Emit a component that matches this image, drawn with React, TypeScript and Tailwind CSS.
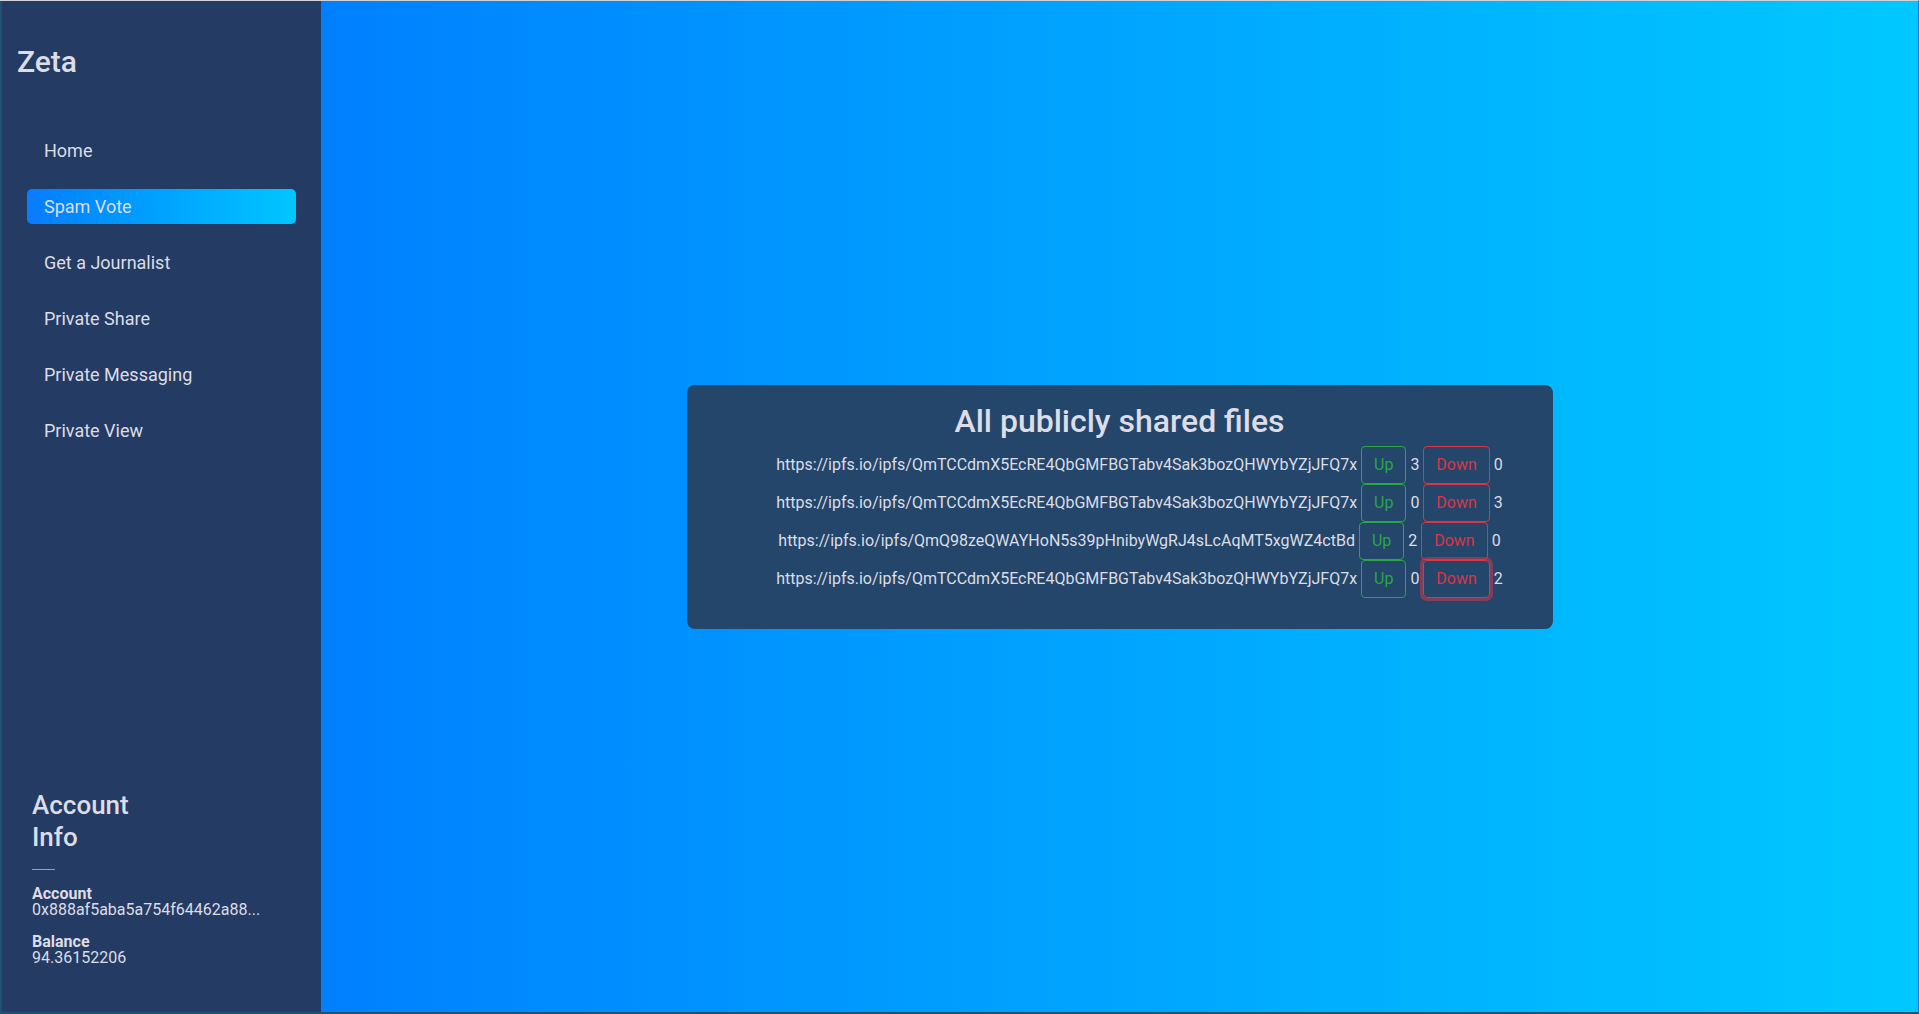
const FILES = [
  { url: "https://ipfs.io/ipfs/QmTCCdmX5EcRE4QbGMFBGTabv4Sak3bozQHWYbYZjJFQ7x", up: 3, down: 0 },
  { url: "https://ipfs.io/ipfs/QmTCCdmX5EcRE4QbGMFBGTabv4Sak3bozQHWYbYZjJFQ7x", up: 0, down: 3 },
  { url: "https://ipfs.io/ipfs/QmQ98zeQWAYHoN5s39pHnibyWgRJ4sLcAqMT5xgWZ4ctBd", up: 2, down: 0 },
  { url: "https://ipfs.io/ipfs/QmTCCdmX5EcRE4QbGMFBGTabv4Sak3bozQHWYbYZjJFQ7x", up: 0, down: 2 },
];

const NAV = ["Home", "Spam Vote", "Get a Journalist", "Private Share", "Private Messaging", "Private View"];

export default function App() {
  return (
    <div className="flex h-screen w-full overflow-hidden border-t border-t-[#cfd2d6] border-b-2 border-b-[#1f5173] border-r border-r-[#2f6fd6] font-['Roboto',sans-serif] text-[#dcdde6]">
      {/* Sidebar */}
      <aside className="flex w-[321px] shrink-0 flex-col border-l-2 border-l-[#1f5173] bg-[#243b64]">
        <div className="pl-[15px] pt-[43px] text-[30px] font-medium leading-[36px]">Zeta</div>

        <nav className="mt-[53px] flex flex-col">
          {NAV.map((item) => (
            <div
              key={item}
              className={`mb-[21px] ml-[25px] mr-[25px] flex h-[35px] items-center rounded-[5px] pl-[17px] text-[18px] ${
                item === "Spam Vote" ? "bg-gradient-to-r from-[#0a7cff] to-[#00c6ff]" : ""
              }`}
            >
              {item}
            </div>
          ))}
        </nav>

        {/* Account info */}
        <div className="mt-auto pb-[46px] pl-[30px]">
          <h3 className="w-[140px] text-[26px] font-medium leading-[32px]">Account Info</h3>
          <div className="mt-[16px] h-px w-[23px] bg-[#a8a18c]" />
          <div className="mt-[16px] text-[16px] leading-[16px]">
            <div className="font-bold">Account</div>
            <div>0x888af5aba5a754f64462a88...</div>
            <div className="mt-[16px] font-bold">Balance</div>
            <div>94.36152206</div>
          </div>
        </div>
      </aside>

      {/* Main */}
      <main className="flex flex-1 items-center justify-center bg-gradient-to-r from-[#0080ff] to-[#00c8ff]">
        <div className="w-[866px] rounded-[8px] bg-[#24466a] pb-[31px] pt-[17px]">
          <h2 className="text-center text-[32px] font-medium leading-[38px]">All publicly shared files</h2>
          <div className="mt-[6px] pl-[40px] text-center text-[16px]">
            {FILES.map((f, i) => (
              <div key={i} className="h-[38px] whitespace-nowrap leading-[38px]">
                {f.url}{" "}
                <button className="inline-block h-[38px] rounded-[4px] border border-[#28a745] px-[12px] align-middle leading-[24px] text-[#28a745]">
                  Up
                </button>{" "}
                {f.up}{" "}
                <button
                  className={`inline-block h-[38px] rounded-[4px] border border-[#dc3545] px-[12px] align-middle leading-[24px] text-[#dc3545] ${
                    i === FILES.length - 1 ? "shadow-[0_0_0_3px_rgba(220,53,69,0.5)]" : ""
                  }`}
                >
                  Down
                </button>{" "}
                {f.down}
              </div>
            ))}
          </div>
        </div>
      </main>
    </div>
  );
}
